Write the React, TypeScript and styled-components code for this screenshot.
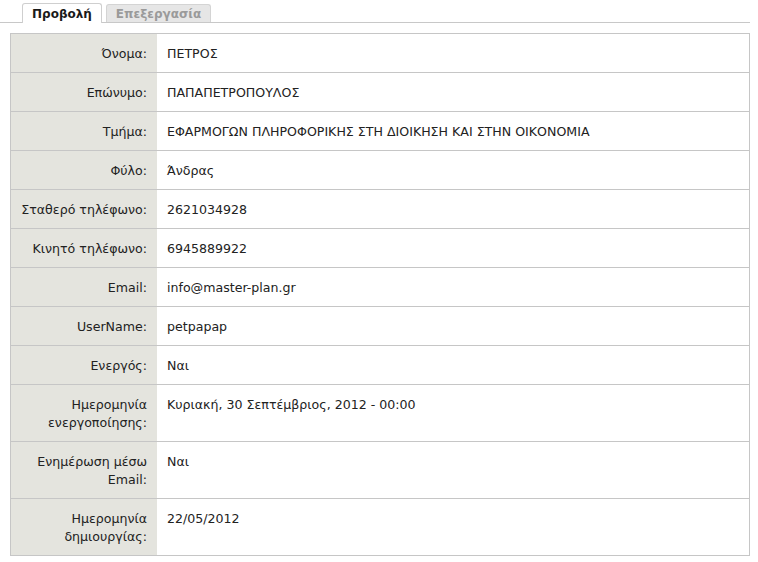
import styled, { createGlobalStyle } from "styled-components";

const GlobalStyle = createGlobalStyle`
    body {
        margin: 0;
        background: #ffffff;
        font-family: "DejaVu Sans", Verdana, sans-serif;
        font-size: 12.6px;
        color: #222;
    }
`;

const Page = styled.div`
    width: 758px;
    padding-top: 3px;
`;

const TabBar = styled.div`
    display: flex;
    align-items: flex-end;
    gap: 4px;
    padding-left: 22px;
    margin-right: 8px;
    border-bottom: 1px solid #c8c8c8;
    height: 19px;
`;

const Tab = styled.div<{ $active?: boolean }>`
    padding: 0 9px;
    display: flex;
    align-items: center;
    font-weight: bold;
    font-size: 12px;
    border: 1px solid ${(p) => (p.$active ? "#cfcfcf" : "#d4d4d4")};
    border-bottom: none;
    border-radius: 3px 3px 0 0;
    background: ${(p) => (p.$active ? "#ffffff" : "#e6e6e6")};
    color: ${(p) => (p.$active ? "#1a1a1a" : "#9a9a9a")};
    margin-bottom: ${(p) => (p.$active ? "-1px" : "0")};
    height: ${(p) => (p.$active ? "19px" : "17px")};
`;

const Table = styled.div`
    margin: 10px 0 0 10px;
    width: 738px;
    border: 1px solid #c6c6c6;
    display: grid;
    grid-template-columns: 146px 1fr;
`;

const Label = styled.div<{ $last?: boolean }>`
    background: #e4e4de;
    text-align: right;
    padding: 11px 10px 9px 6px;
    line-height: 18px;
    border-bottom: ${(p) => (p.$last ? "none" : "1px solid #c6c6c6")};
`;

const Value = styled.div<{ $last?: boolean }>`
    padding: 11px 10px 9px 10px;
    line-height: 18px;
    border-bottom: ${(p) => (p.$last ? "none" : "1px solid #c6c6c6")};
`;

const rows: [string, string][] = [
    ["Όνομα:", "ΠΕΤΡΟΣ"],
    ["Επώνυμο:", "ΠΑΠΑΠΕΤΡΟΠΟΥΛΟΣ"],
    ["Τμήμα:", "ΕΦΑΡΜΟΓΩΝ ΠΛΗΡΟΦΟΡΙΚΗΣ ΣΤΗ ΔΙΟΙΚΗΣΗ ΚΑΙ ΣΤΗΝ ΟΙΚΟΝΟΜΙΑ"],
    ["Φύλο:", "Άνδρας"],
    ["Σταθερό τηλέφωνο:", "2621034928"],
    ["Κινητό τηλέφωνο:", "6945889922"],
    ["Email:", "info@master-plan.gr"],
    ["UserName:", "petpapap"],
    ["Ενεργός:", "Ναι"],
    ["Ημερομηνία ενεργοποίησης:", "Κυριακή, 30 Σεπτέμβριος, 2012 - 00:00"],
    ["Ενημέρωση μέσω Email:", "Ναι"],
    ["Ημερομηνία δημιουργίας:", "22/05/2012"],
];

export default function App() {
    return (
        <Page>
            <GlobalStyle />
            <TabBar>
                <Tab $active>Προβολή</Tab>
                <Tab>Επεξεργασία</Tab>
            </TabBar>
            <Table>
                {rows.map(([label, value], i) => {
                    const last = i === rows.length - 1;
                    return (
                        <>
                            <Label key={"l" + i} $last={last}>
                                {label}
                            </Label>
                            <Value key={"v" + i} $last={last}>
                                {value}
                            </Value>
                        </>
                    );
                })}
            </Table>
        </Page>
    );
}
